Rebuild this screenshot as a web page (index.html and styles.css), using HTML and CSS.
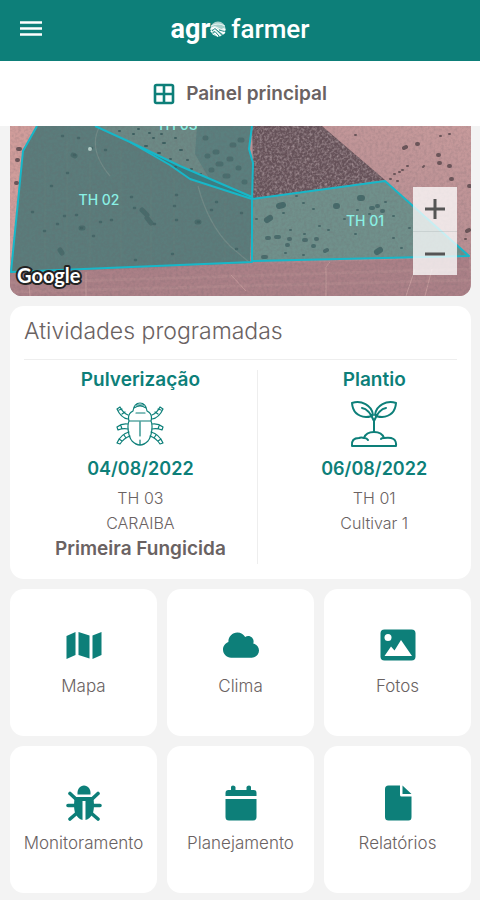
FILE: index.html
```html
<!DOCTYPE html>
<html lang="pt-BR">
<head>
    <meta charset="UTF-8">
    <meta name="viewport" content="width=device-width, initial-scale=1.0">
    <title>Agro Farmer</title>
    <link rel="stylesheet" href="styles.css">
</head>
<body>
    <header class="topbar">
        <button type="button" class="menu" aria-label="Abrir menu">
            <svg width="22" height="16" viewBox="0 0 22 16"><path d="M0 1.500h22M0 7.500h22M0 13.500h22" stroke="currentColor" stroke-width="2.6"/></svg>
        </button>
        <div class="logo">
            <span class="logo-agr">agr</span>
            <svg class="logo-o" width="16" height="16" viewBox="0 0 16 16">
                <circle cx="8" cy="8" r="7.6" fill="#a5d0cb"/>
                <path d="M1 7Q5 4 8 7T15 7M1 5Q8 1 15 5" fill="none" stroke="#fff" stroke-width=".8"/>
                <path d="M.5 8.500Q4 5.500 7 8L14 13M.8 11L4 8.500L10.500 15M3 13.500L5 12L8 15.500M15.500 8.500L11 9.500L15 12" fill="none" stroke="#fff" stroke-width="1.500"/>
                <path d="M2 9.800L5 7.500L12.500 14M3 12.200L5 10.500L9 15M9 9L14.500 10.500" fill="none" stroke="#0d7f79" stroke-width=".9"/>
            </svg>
            <span class="logo-farmer">farmer</span>
        </div>
    </header>

    <div class="titulo">
        <svg width="22" height="22" viewBox="0 0 22 22" fill="none" stroke="#0d7f79" stroke-width="2.6"><rect x="2" y="2" width="18" height="18" rx="1.500"/><path d="M11 2v18M2 11h18"/></svg>
        <h1>Painel principal</h1>
    </div>

    <main>
        <!-- Mapa dos talhões -->
        <section class="mapa">
            <svg class="mapa-img" viewBox="0 0 461 170" preserveAspectRatio="xMidYMid slice">
                <defs>
                    <filter id="grao" x="0" y="0" width="100%" height="100%">
                        <feTurbulence type="fractalNoise" baseFrequency=".35" numOctaves="2" seed="4"/>
                        <feColorMatrix values="0 0 0 0 .15  0 0 0 0 .12  0 0 0 0 .14  1.6 0 0 0 -.62"/>
                    </filter>
                    <filter id="graoForte" x="0" y="0" width="100%" height="100%">
                        <feTurbulence type="fractalNoise" baseFrequency=".4" numOctaves="2" seed="9"/>
                        <feColorMatrix values="0 0 0 0 .68  0 0 0 0 .56  0 0 0 0 .58  1.8 0 0 0 -.7"/>
                        <feComposite in2="SourceGraphic" operator="in"/>
                    </filter>
                    <linearGradient id="solo" x1="0" x2="1" y1="1" y2="0">
                        <stop offset="0" stop-color="#94727a"/>
                        <stop offset=".5" stop-color="#b38b90"/>
                        <stop offset="1" stop-color="#c89b9c"/>
                    </linearGradient>
                </defs>
                <rect width="461" height="170" fill="url(#solo)"/>
                <path d="M0 0H27L13 25L1 146L0 140Z" fill="#d09d9b"/>
                <path d="M0 147L459 131L461 170H0Z" fill="#ab8087"/>
                <path d="M0 157L461 143M0 166L461 154" stroke="#b88e92" stroke-width="3" opacity=".4"/>
                <path d="M316 170V141L320 136M20 170L19 159M396 170L405 143M415 170L422 143M76 170V146M221 149L236 165" fill="none" stroke="#d3aaa9" opacity=".6"/>

                <!-- Áreas -->
                <path d="M27 0L13 25L1 146L240 137L242 73L185 52L160 39L120 16L85 0Z" fill="#5b7c7b"/>
                <path d="M85 0L120 16L170 42L242 73L243 37L239 23L242 0Z" fill="#6c8985"/>
                <path d="M187 0H241L239 23L243 37L242 70L200 54L185 28Z" fill="#5b7f7e"/>
                <path d="M120 16L170 40L242 71V73L180 53L160 39Z" fill="#3a7e83"/>
                <path d="M242 73L375 55L459 130L242 135Z" fill="#70908b"/>
                <path d="M242 0H312L375 54L243 73L243 37Z" fill="#665259"/>
                <path d="M242 0H312L375 54L243 73L243 37Z" filter="url(#graoForte)" opacity=".6"/>
                <path d="M188 60Q198 98 220 120L240 137M90 0Q77 22 100 50" fill="none" stroke="#7f9490" stroke-width="1.200" opacity=".6"/>
                <path d="M35 30V143M57 15V142M80 35V141M111 20V140M141 45V139M164 50V138M215 75V137" stroke="#688582" opacity=".35"/>

                <!-- Árvores -->
                <g fill="none" stroke-linecap="round" stroke="#3c6061">
                    <path stroke-width="2.500" opacity=".75" d="M52 10h1M68 12h1M64 29h1M81 22h1M95 24h1M57 47h1M41 60h1M66 89h1M54 90h1M47 98h1M71 102h1M90 96h1M101 94h1M83 110h1M124 82h1M121 71h1M166 69h1M164 80h1M166 94h1M188 96h1M206 76h1M231 87h1M162 128h1M125 134h1M34 105h1M22 86h1M144 98h1M226 123h1M201 84h1"/>
                    <path stroke-width="5" d="M50 124l2 3M132 84l5 5M137 92l4 5M71 102h2M63 29l2 1M187 96h2" opacity=".6"/>
                    <path stroke-width="2" d="M123 8h1M135 20h2M143 12h1M148 27h2M153 17h2M160 33h1M170 24h2M165 12h1M177 34h1M181 43h1M109 5h1M128 3h1M165 41h1M190 48h1M139 7h1M151 8h1"/>
                    <path stroke-width="5" d="M195 12h1M205 26h2M208 38h3M222 19h2M228 42h1M215 50h3M201 44h1M230 14h2M197 30h1M219 33h2M234 56h1" opacity=".55"/>
                    <path stroke-width="6" d="M269 80l4-1M350 72h2M257 94l3-2M367 126l3-2M326 80h1" opacity=".8"/>
                    <path stroke-width="4" opacity=".75" d="M257 112h2M266 111h3M279 113h1M294 114h2M306 113h1M315 125l2-1M361 82h2M367 80h1M277 119h1M253 131h3M303 120h1M372 85h1"/>
                    <path stroke-width="2" opacity=".8" d="M286 70h1M293 77h1M303 83h1M273 87h1M246 93h1M280 104h1M294 108h1M309 100h1M318 104h1M334 93h1M345 108h1M359 88h1M383 90h1M399 102h1M383 112h1M391 122h1M275 127h1M293 129h1M347 84h1M375 76h1"/>
                </g>
                <g fill="none" stroke-linecap="round" stroke="#6b5559">
                    <path stroke-width="4" d="M407 18h1M394 22l2-1M428 29h1M429 37h1M439 40h1M441 53h1M459 60h1M457 105l2-1M8 23h2M7 34h1M6 57h1"/>
                    <path stroke-width="2" d="M345 9h1M430 10h1M439 8h1M414 40l-1 1M397 40h1M389 46h1M384 48h1M380 53h1M387 55h1M392 44h1M455 113h1"/>
                </g>
                <circle cx="80" cy="23" r="2" fill="#b7d3cd"/>
                <rect width="461" height="170" filter="url(#grao)" opacity=".28"/>

                <!-- Limites -->
                <g fill="none" stroke="#17b7c8" stroke-width="2" stroke-linejoin="round">
                    <path d="M27 0L13 25L1 146L242 136V73L180 53L160 39L120 16L85 0"/>
                    <path d="M120 16L170 40L242 71M242 0L239 23L243 37L242 73"/>
                    <path d="M242 73L375 55L459 130L242 135"/>
                </g>
                <g class="talhao">
                    <text x="167" y="4">TH 03</text>
                    <text x="89" y="79">TH 02</text>
                    <text x="355" y="100">TH 01</text>
                </g>
                <text class="google" x="7" y="157">Google</text>
            </svg>
            <div class="zoom">
                <button type="button" aria-label="Aproximar"><svg width="20" height="20" viewBox="0 0 20 20"><path d="M0 10h20M10 0v20" stroke="currentColor" stroke-width="3"/></svg></button>
                <button type="button" aria-label="Afastar"><svg width="20" height="20" viewBox="0 0 20 20"><path d="M0 10h20" stroke="currentColor" stroke-width="3"/></svg></button>
            </div>
        </section>

        <section class="atividades">
            <h2>Atividades programadas</h2>
            <div class="lista">
                <article class="atividade">
                    <h3>Pulverização</h3>
                    <svg width="48" height="48" viewBox="0 0 48 48" fill="none" stroke="#0d7f79" stroke-width="1.200" stroke-linecap="round" stroke-linejoin="round">
                        <path d="M13 21C11 25 12 36 16 41Q24 49 32 41C36 36 37 25 35 21ZM13 21Q11 14 17 11Q18 3 24 3T31 11Q37 14 35 21M18 8Q24 4 30 8M20 5h8M20 13h9M24 22v14M24 40v5"/>
                        <path d="M12 19Q5 18 1 9L4 7Q7 13 12 15M36 19Q43 18 47 9L44 7Q41 13 36 15M12 24Q6 23 1 27L2 30Q7 28 12 29M36 24Q42 23 47 27L46 30Q41 28 36 29M13 32Q5 34 1 43L4 44Q8 38 14 36M35 32Q43 34 47 43L44 44Q40 38 34 36M3 10l3-1M45 10l-3-1M6 14l3-2M42 14l-3-2M5 26l1 3M43 26l-1 3M3 39l3 2M45 39l-3 2M8 35l2 3M40 35l-2 3"/>
                    </svg>
                    <time datetime="2022-08-04">04/08/2022</time>
                    <p>TH 03</p>
                    <p>CARAIBA</p>
                    <p class="forte">Primeira Fungicida</p>
                </article>
                <article class="atividade">
                    <h3>Plantio</h3>
                    <svg width="48" height="48" viewBox="0 0 48 48" fill="none" stroke="#0d7f79" stroke-width="2" stroke-linecap="round" stroke-linejoin="round">
                        <path d="M23 15C22 5 11 0 2 3Q3 16 16 17Q21 17 23 15ZM25 15C26 5 37 0 46 3Q45 16 32 17Q27 17 25 15ZM12 8Q19 9 24 21V32M36 8Q29 9 24 21"/>
                        <path d="M2 46Q1 38 9 38Q11 37 14 38Q16 32 24 32T34 38Q47 36 46 46ZM14 38q3 0 4 2M34 38q-3 0-3 1"/>
                    </svg>
                    <time datetime="2022-08-06">06/08/2022</time>
                    <p>TH 01</p>
                    <p>Cultivar 1</p>
                </article>
            </div>
        </section>

        <nav class="atalhos">
            <a href="#mapa">
                <svg width="36" height="36" viewBox="0 0 36 36"><path d="M.5 8L9.500 4V27L.5 31ZM12.500 4L23.500 7.500V30.500L12.500 27ZM26.500 7.500L35.500 4V27L26.500 31Z"/></svg>
                Mapa
            </a>
            <a href="#clima">
                <svg width="36" height="36" viewBox="0 -48 640 640"><path d="M537.6 226.6c4.1-10.7 6.4-22.400 6.4-34.600 0-53-43-96-96-96-19.700 0-38.100 6-53.300 16.200C367 64.200 315.300 32 256 32c-88.400 0-160 71.600-160 160 0 2.700.1 5.400.2 8.100C40.200 219.800 0 273.200 0 336c0 79.500 64.500 144 144 144h368c70.700 0 128-57.300 128-128 0-61.900-44-113.600-102.400-125.400z"/></svg>
                Clima
            </a>
            <a href="#fotos">
                <svg width="36" height="36" viewBox="0 0 36 36"><rect x=".5" y="1.500" width="35" height="31" rx="4"/><circle cx="8" cy="9.500" r="3.500" fill="#fff"/><path d="M4.500 28L11 18.500L14.500 22.500L21 12L32 28Z" fill="#fff"/></svg>
                Fotos
            </a>
            <a href="#monitoramento">
                <svg width="36" height="36" viewBox="0 0 36 36"><path d="M11.500 9.500C11 4 14 .5 18 .5S25 4 24.500 9.500Z"/><path d="M9 12H27Q29 20 27 28Q24 34 19.500 35V16H16.500V35Q12 34 9 28Q7 20 9 12Z"/><path d="M11 15L4 8.500M25 15L32 8.500M9 20.500H2M27 20.500H34M11 28L4 34M25 28L32 34" stroke="#0d7f79" stroke-width="3.600" stroke-linecap="round"/></svg>
                Monitoramento
            </a>
            <a href="#planejamento">
                <svg width="36" height="36" viewBox="0 0 36 36"><path d="M2.500 11V8Q2.500 5 5.500 5H8V2Q8 .5 10 .5T12.500 2V5H23.500V2Q24 .5 26 .5T28 2V5H30.500Q33.500 5 33.500 8V11ZM2.500 14H33.500V32Q33.500 35.500 30 35.500H6Q2.500 35.500 2.500 32Z"/></svg>
                Planejamento
            </a>
            <a href="#relatorios">
                <svg width="36" height="36" viewBox="0 0 36 36"><path d="M8.500 .5H20V10Q20 11.500 21.500 11.500H31.500V32Q31.500 35.500 28.500 35.500H8.500Q5 35.500 5 32V4Q5 .5 8.500 .5ZM22.500 .5L31.500 9H22.500Z"/></svg>
                Relatórios
            </a>
        </nav>
    </main>
</body>
</html>
```

FILE: styles.css
```css
* {
    box-sizing: border-box;
}

body {
    margin: 0;
    background: #f3f3f3;
    color: #6a6262;
    font-family: Inter, "Open Sans", sans-serif;
}

h1, h2, h3, p {
    margin: 0;
}

svg {
    display: block;
}

button {
    padding: 0;
    border: none;
    background: none;
    cursor: pointer;
}

/* Barra superior */
.topbar {
    display: grid;
    grid-template-columns: 1fr auto 1fr;
    align-items: center;
    height: 61px;
    padding: 0 20px 4px;
    background: #0d7f79;
    color: white;
}

.menu {
    justify-self: start;
    color: white;
}

.logo {
    display: flex;
    align-items: center;
    font-family: Roboto, sans-serif;
    font-size: 26px;
    line-height: 30px;
}

.logo-agr {
    font-size: 27px;
    font-weight: bold;
}

.logo-farmer {
    margin-left: 5px;
    font-weight: 500;
}

.titulo {
    display: flex;
    align-items: center;
    justify-content: center;
    gap: 11px;
    height: 65px;
    background: white;
}

.titulo h1 {
    font-size: 19px;
    font-weight: 600;
}

main {
    display: flex;
    flex-direction: column;
    gap: 10px;
    padding: 0 9px 7px 10px;
}

/* Mapa */
.mapa {
    position: relative;
    overflow: hidden;
    border-radius: 0 0 12px 12px;
}

.mapa-img {
    width: 100%;
}

.talhao {
    fill: #8af0e4;
    font-size: 14px;
    font-weight: 500;
    text-anchor: middle;
}

.google {
    fill: white;
    stroke: #222;
    stroke-width: 4px;
    stroke-linejoin: round;
    paint-order: stroke;
    font-family: Lato, sans-serif;
    font-size: 20px;
    font-weight: bold;
}

.zoom {
    position: absolute;
    right: 14px;
    bottom: 21px;
    display: flex;
    flex-direction: column;
    background: rgba(255, 255, 255, 0.76);
}

.zoom button {
    display: flex;
    align-items: center;
    justify-content: center;
    width: 44px;
    height: 44px;
    color: #555;
}

.zoom button + button {
    border-top: 1px solid rgba(160, 170, 170, 0.3);
}

/* Atividades */
.atividades {
    padding: 10px 14px 15px;
    border-radius: 14px;
    background: white;
}

.atividades h2 {
    padding-bottom: 13px;
    border-bottom: 1px solid #eee;
    font-size: 23px;
    font-weight: 300;
    line-height: 30px;
}

.lista {
    display: flex;
    overflow: hidden;
    padding-top: 10px;
}

.atividade {
    display: flex;
    flex: 0 0 54%;
    flex-direction: column;
    align-items: center;
    min-height: 194px;
    border-right: 1px solid #eee;
    font-size: 16px;
    font-weight: 300;
    line-height: 25px;
}

.atividade h3,
.atividade .forte {
    font-size: 19px;
    font-weight: 600;
}

.atividade h3,
.atividade time {
    color: #0d7f79;
}

.atividade h3 {
    line-height: 20px;
    margin-bottom: 10px;
}

.atividade time {
    margin: 8px 0 5px;
    font-size: 18px;
    font-weight: 600;
}

/* Atalhos */
.atalhos {
    display: grid;
    grid-template-columns: repeat(3, 1fr);
    gap: 10px;
}

.atalhos a {
    display: flex;
    flex-direction: column;
    align-items: center;
    justify-content: center;
    gap: 12px;
    aspect-ratio: 1;
    min-width: 0;
    padding-bottom: 2px;
    border-radius: 14px;
    background: white;
    color: #6a6262;
    font-size: 17px;
    font-weight: 300;
    line-height: 20px;
    text-decoration: none;
}

.atalhos svg {
    fill: #0d7f79;
}
```
